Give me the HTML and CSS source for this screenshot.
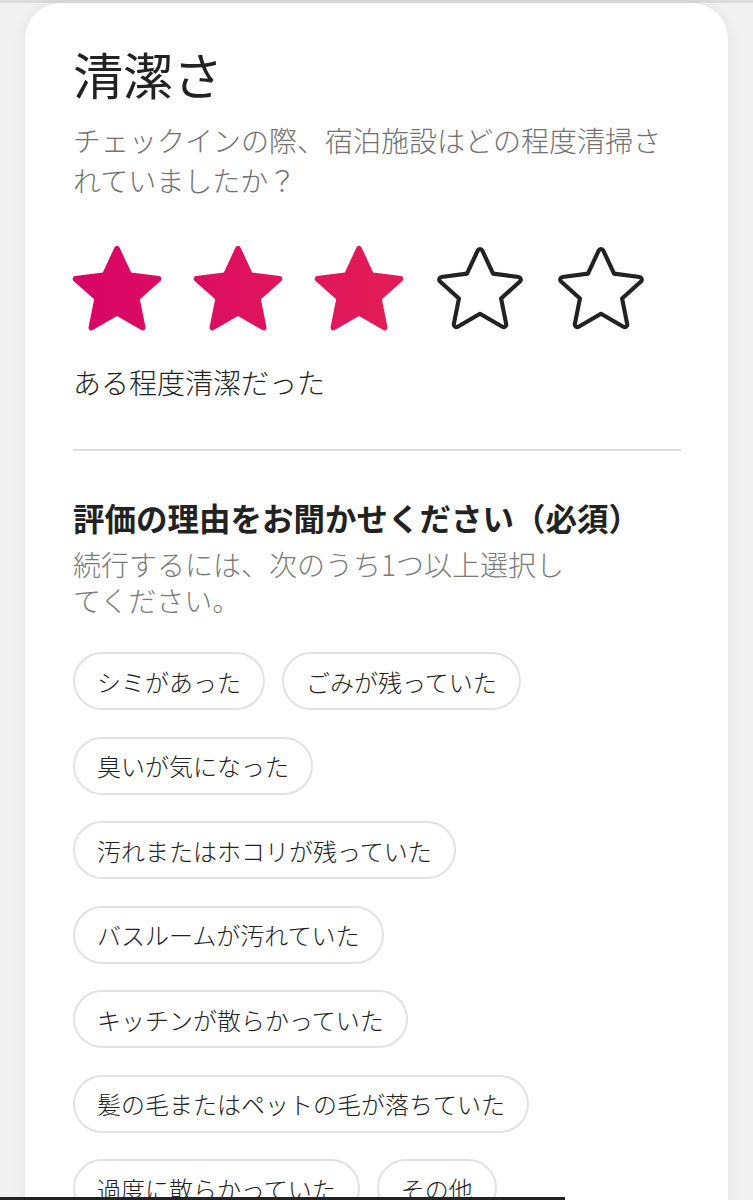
FILE: index.html
```html
<!DOCTYPE html>
<html lang="ja">
<head>
    <meta charset="UTF-8">
    <meta name="viewport" content="width=device-width, initial-scale=1.0">
    <title>清潔さ</title>
    <link rel="stylesheet" href="styles.css">
</head>
<body>
    <div class="topbar"></div>
    <div class="card">
      <h1 class="title">清潔さ</h1>
      <p class="question">チェックインの際、宿泊施設はどの程度清掃されていましたか？</p>

      <div class="stars">
          <button class="star" aria-label="1">
              <svg viewBox="0 0 32 32" width="90" height="90">
                  <defs><linearGradient id="g1" x1="0" x2="1" y1="0" y2="0"><stop offset="0" stop-color="#d60567"/><stop offset="1" stop-color="#dc0c62"/></linearGradient></defs>
                  <path fill="url(#g1)" d="M15.1 1.58l-4.13 8.88-9.86 1.27a1 1 0 0 0-.54 1.74l7.3 6.57-1.97 9.85a1 1 0 0 0 1.48 1.06l8.62-5 8.63 5a1 1 0 0 0 1.48-1.06l-1.97-9.85 7.3-6.57a1 1 0 0 0-.55-1.73l-9.86-1.28-4.12-8.88a1 1 0 0 0-1.82 0z"/>
              </svg>
          </button>
          <button class="star" aria-label="2">
              <svg viewBox="0 0 32 32" width="90" height="90">
                  <defs><linearGradient id="g2" x1="0" x2="1" y1="0" y2="0"><stop offset="0" stop-color="#dc0d61"/><stop offset="1" stop-color="#e0155c"/></linearGradient></defs>
                  <path fill="url(#g2)" d="M15.1 1.58l-4.13 8.88-9.86 1.27a1 1 0 0 0-.54 1.74l7.3 6.57-1.97 9.85a1 1 0 0 0 1.48 1.06l8.62-5 8.63 5a1 1 0 0 0 1.48-1.06l-1.97-9.85 7.3-6.57a1 1 0 0 0-.55-1.73l-9.86-1.28-4.12-8.88a1 1 0 0 0-1.82 0z"/>
              </svg>
          </button>
          <button class="star" aria-label="3">
              <svg viewBox="0 0 32 32" width="90" height="90">
                  <defs><linearGradient id="g3" x1="0" x2="1" y1="0" y2="0"><stop offset="0" stop-color="#e0165b"/><stop offset="1" stop-color="#e41d55"/></linearGradient></defs>
                  <path fill="url(#g3)" d="M15.1 1.58l-4.13 8.88-9.86 1.27a1 1 0 0 0-.54 1.74l7.3 6.57-1.97 9.85a1 1 0 0 0 1.48 1.06l8.62-5 8.63 5a1 1 0 0 0 1.48-1.06l-1.97-9.85 7.3-6.57a1 1 0 0 0-.55-1.73l-9.86-1.28-4.12-8.88a1 1 0 0 0-1.82 0z"/>
              </svg>
          </button>
          <button class="star" aria-label="4">
              <svg viewBox="0 0 32 32" width="90" height="90">
                  <path class="empty" d="M15.1 1.58l-4.13 8.88-9.86 1.27a1 1 0 0 0-.54 1.74l7.3 6.57-1.97 9.85a1 1 0 0 0 1.48 1.06l8.62-5 8.63 5a1 1 0 0 0 1.48-1.06l-1.97-9.85 7.3-6.57a1 1 0 0 0-.55-1.73l-9.86-1.28-4.12-8.88a1 1 0 0 0-1.82 0z"/>
              </svg>
          </button>
          <button class="star" aria-label="5">
              <svg viewBox="0 0 32 32" width="90" height="90">
                  <path class="empty" d="M15.1 1.58l-4.13 8.88-9.86 1.27a1 1 0 0 0-.54 1.74l7.3 6.57-1.97 9.85a1 1 0 0 0 1.48 1.06l8.62-5 8.63 5a1 1 0 0 0 1.48-1.06l-1.97-9.85 7.3-6.57a1 1 0 0 0-.55-1.73l-9.86-1.28-4.12-8.88a1 1 0 0 0-1.82 0z"/>
              </svg>
          </button>
      </div>

      <p class="rating-label">ある程度清潔だった</p>

      <hr class="divider">

      <h2 class="reason-title">評価の理由をお聞かせください（必須）</h2>
      <p class="reason-note">続行するには、次のうち1つ以上選択してください。</p>

      <div class="chips">
          <button class="chip">シミがあった</button>
          <button class="chip">ごみが残っていた</button>
          <button class="chip">臭いが気になった</button>
          <button class="chip">汚れまたはホコリが残っていた</button>
          <button class="chip">バスルームが汚れていた</button>
          <button class="chip">キッチンが散らかっていた</button>
          <button class="chip">髪の毛またはペットの毛が落ちていた</button>
          <button class="chip">過度に散らかっていた</button>
          <button class="chip">その他</button>
      </div>
    </div>
    <div class="progress"></div>
</body>
</html>
```

FILE: styles.css
```css
  body {
      font-family: "Noto Sans CJK JP", "Noto Sans", sans-serif;
      font-weight: 300;
      background-color: #f1f1f1;
      margin: 0;
      color: #222;
      overflow: hidden;
  }

  .topbar {
      height: 3px;
      background-color: #dcdcdc;
  }

  .card {
      margin: 0 25px;
      min-height: 1300px;
      background-color: #fff;
      border-radius: 36px 36px 0 0;
      padding: 40px 47px 0 48px;
      box-shadow: 0 0 14px rgba(0, 0, 0, 0.07);
  }

  .title {
      margin: 0;
      font-size: 50px;
      font-weight: 400;
      line-height: 60px;
  }

  .question {
      margin: 17px 0 0;
      font-size: 28px;
      line-height: 40px;
      color: #717171;
  }

  .stars {
      display: flex;
      gap: 31px;
      margin-top: 43px;
      margin-left: -1px;
  }

  .star {
      padding: 0;
      border: none;
      background: none;
      width: 90px;
      height: 90px;
  }

  .star svg {
      display: block;
  }

  .empty {
      fill: none;
      stroke: #222;
      stroke-width: 1.6;
      stroke-linejoin: round;
      transform: scale(0.92);
      transform-origin: 16px 16px;
  }

  .rating-label {
      margin: 29px 0 0;
      font-size: 28px;
      line-height: 40px;
  }

  .divider {
      margin: 47px 0 0;
      border: none;
      border-top: 2px solid #dddddd;
  }

  .reason-title {
      margin: 46px 0 0;
      font-size: 31.5px;
      font-weight: 700;
      line-height: 40px;
  }

  .reason-note {
      margin: 9px 0 0;
      max-width: 500px;
      font-size: 28px;
      line-height: 36px;
      color: #7a7a7a;
  }

  .chips {
      display: flex;
      flex-wrap: wrap;
      gap: 26.5px 17px;
      margin-top: 34px;
  }

  .chip {
      height: 58px;
      padding: 0 22px;
      font-family: inherit;
      font-size: 24px;
      font-weight: 300;
      color: #222;
      background-color: #fff;
      border: 2px solid #e2e2e2;
      border-radius: 29px;
  }

  .progress {
      position: fixed;
      left: 0;
      bottom: 0;
      width: 565px;
      height: 3px;
      background-color: #222;
  }
```
